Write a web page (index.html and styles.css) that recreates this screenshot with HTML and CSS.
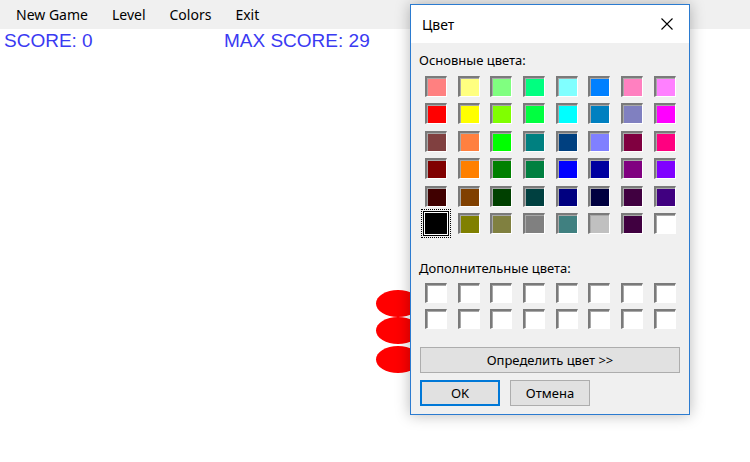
FILE: index.html
```html
<!DOCTYPE html>
<html>
<head>
<meta charset="utf-8">
<link rel="stylesheet" href="styles.css">
</head>
<body>
<div class="app">
  <nav class="menubar">
    <span class="menu-item">New Game</span>
    <span class="menu-item">Level</span>
    <span class="menu-item">Colors</span>
    <span class="menu-item">Exit</span>
  </nav>
  <div class="scores">
    <span class="score">SCORE: 0</span>
    <span class="score max">MAX SCORE: 29</span>
  </div>
  <div class="field">
    <div class="seg" style="top:237px"></div>
    <div class="seg" style="top:264px"></div>
    <div class="seg" style="top:293px"></div>
  </div>

  <div class="dialog">
    <div class="titlebar">
      <span class="title">Цвет</span>
      <svg class="close" width="12" height="12" viewBox="0 0 12 12"><path d="M0.5 0.5 L11.5 11.5 M11.5 0.5 L0.5 11.5" stroke="#000" stroke-width="1.1" fill="none"/></svg>
    </div>
    <div class="dbody">
      <div class="label">Основные цвета:</div>
      <div class="grid basic">
        <i style="background:#ff8080"></i><i style="background:#ffff80"></i><i style="background:#80ff80"></i><i style="background:#00ff80"></i><i style="background:#80ffff"></i><i style="background:#0080ff"></i><i style="background:#ff80c0"></i><i style="background:#ff80ff"></i>
        <i style="background:#ff0000"></i><i style="background:#ffff00"></i><i style="background:#80ff00"></i><i style="background:#00ff40"></i><i style="background:#00ffff"></i><i style="background:#0080c0"></i><i style="background:#8080c0"></i><i style="background:#ff00ff"></i>
        <i style="background:#804040"></i><i style="background:#ff8040"></i><i style="background:#00ff00"></i><i style="background:#008080"></i><i style="background:#004080"></i><i style="background:#8080ff"></i><i style="background:#800040"></i><i style="background:#ff0080"></i>
        <i style="background:#800000"></i><i style="background:#ff8000"></i><i style="background:#008000"></i><i style="background:#008040"></i><i style="background:#0000ff"></i><i style="background:#0000a0"></i><i style="background:#800080"></i><i style="background:#8000ff"></i>
        <i style="background:#400000"></i><i style="background:#804000"></i><i style="background:#004000"></i><i style="background:#004040"></i><i style="background:#000080"></i><i style="background:#000040"></i><i style="background:#400040"></i><i style="background:#400080"></i>
        <i class="selected" style="background:#000000"></i><i style="background:#808000"></i><i style="background:#808040"></i><i style="background:#808080"></i><i style="background:#408080"></i><i style="background:#c0c0c0"></i><i style="background:#400040"></i><i style="background:#ffffff"></i>
      </div>
      <div class="label label2">Дополнительные цвета:</div>
      <div class="grid custom">
        <i></i><i></i><i></i><i></i><i></i><i></i><i></i><i></i>
        <i></i><i></i><i></i><i></i><i></i><i></i><i></i><i></i>
      </div>
      <button class="btn wide">Определить цвет &gt;&gt;</button>
      <div class="btnrow">
        <button class="btn ok">OK</button>
        <button class="btn">Отмена</button>
      </div>
    </div>
  </div>
</div>
</body>
</html>
```
FILE: styles.css
```css
* { box-sizing: border-box; }
html, body { margin: 0; padding: 0; background: #fff; }
.app {
  position: relative;
  width: 750px;
  height: 462px;
  overflow: hidden;
  font-family: "Noto Sans", "Open Sans", sans-serif;
}
.menubar {
  height: 29px;
  background: #f0f0f0;
  display: flex;
  align-items: center;
  padding-left: 4px;
  font-size: 14px;
  color: #000;
}
.menu-item { padding: 0 12px; }
.scores {
  display: flex;
  padding-left: 4px;
  height: 24px;
  align-items: center;
  font-family: "Liberation Sans", Arial, sans-serif;
  font-size: 19px;
  color: #3a3af2;
}
.score { width: 220px; }
.field { position: relative; }
.seg {
  position: absolute;
  left: 376px;
  width: 44px;
  height: 27px;
  background: #ff0000;
  border-radius: 50%;
}
.dialog {
  position: absolute;
  left: 410px;
  top: 4px;
  width: 280px;
  height: 411px;
  background: #f0f0f0;
  border: 1px solid #2b7bd0;
  box-shadow: 0 0 14px rgba(0,0,0,0.28);
  display: flex;
  flex-direction: column;
}
.titlebar {
  height: 38px;
  background: #fff;
  display: flex;
  align-items: center;
  justify-content: space-between;
  padding: 0 16px 0 11px;
  font-size: 14px;
}
.close { display: block; }
.dbody {
  padding: 9px 0 0 8px;
  font-size: 13px;
  color: #000;
}
.label { height: 16px; line-height: 16px; }
.grid {
  display: grid;
  grid-template-columns: repeat(8, 22px);
  column-gap: 10.7px;
  padding-left: 6px;
}
.basic {
  margin-top: 8px;
  grid-auto-rows: 21px;
  row-gap: 6.4px;
}
.grid i {
  display: block;
  border-style: solid;
  border-width: 2px 1px 1px 2px;
  border-color: #7a7a7a #fff #fff #7a7a7a;
  box-shadow: inset 1px 1px 0 #a8a8a8;
}
.grid i.selected {
  border: 2px solid #000;
  box-shadow: 0 0 0 1px #fff, 0 0 0 2px #000;
  outline: 1px dotted #000;
  outline-offset: 3px;
}
.label2 { margin-top: 26px; }
.custom {
  margin-top: 7px;
  grid-auto-rows: 20px;
  row-gap: 6px;
}
.custom i { background: #fff; }
.btn {
  font-family: "Noto Sans", "Open Sans", sans-serif;
  font-size: 13px;
  color: #000;
  background: #e1e1e1;
  border: 1px solid #adadad;
  height: 26px;
  padding: 0;
}
.wide {
  display: block;
  margin-top: 18px;
  margin-left: 1px;
  width: 260px;
}
.btnrow {
  display: flex;
  gap: 10px;
  margin-top: 7px;
  margin-left: 1px;
}
.btnrow .btn { width: 80px; }
.btn.ok { border: 2px solid #0078d7; }
```
